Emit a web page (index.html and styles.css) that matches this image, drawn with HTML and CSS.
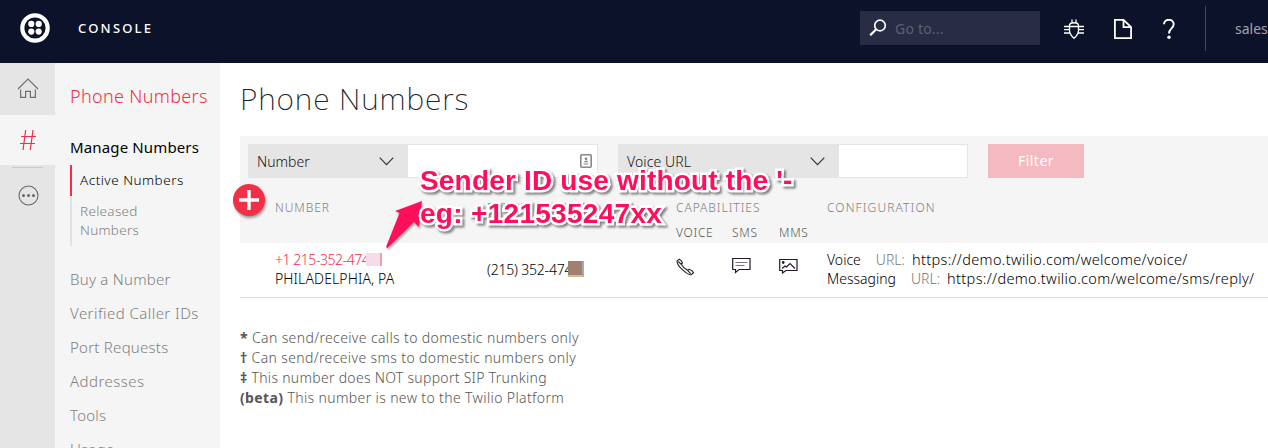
FILE: index.html
```html
<!DOCTYPE html>
<html lang="en">
<head>
<meta charset="utf-8">
<title>Phone Numbers</title>
<link rel="stylesheet" href="styles.css">
</head>
<body>
<header class="topbar">
  <svg class="logo" width="30" height="30" viewBox="0 0 30 30"><circle cx="15" cy="15" r="12.7" fill="none" stroke="#fff" stroke-width="4.2"/><g fill="#fff"><circle cx="11.3" cy="10.9" r="3.1"/><circle cx="18.7" cy="10.9" r="3.1"/><circle cx="11.3" cy="18.6" r="3.1"/><circle cx="18.7" cy="18.6" r="3.1"/></g></svg>
  <span class="brand">CONSOLE</span>
  <div class="search">
    <svg width="18" height="18" viewBox="0 0 18 18" fill="none" stroke="#fff"><circle cx="11" cy="6.500" r="5.300" stroke-width="1.7"/><path d="M7 10.500L1.200 16.300" stroke-width="2.200"/></svg>
    <span class="hint">Go to...</span>
  </div>
  <svg class="bug" width="20" height="21" viewBox="0 0 20 21" fill="none" stroke="#fff" stroke-width="1.300"><path d="M5.500 6.500C5.500 2.800 14.500 2.800 14.500 6.500V11.500C14.500 15 12 17.500 10 19.300C8 17.500 5.500 15 5.500 11.500ZM8 .5V3.500M12 .5V3.500M0 7.500H20M0 10.700H5.500M14.500 10.700H20M0 14H6M14 14H20"/></svg>
  <svg class="doc" width="18" height="20" viewBox="0 0 18 20" fill="none" stroke="#fff" stroke-width="1.800"><path d="M.9.9H9.500L17.100 8.200V19.100H.9ZM9.500.9V8.200H17.100"/></svg>
  <svg class="help" width="12" height="20" viewBox="0 0 12 20"><path d="M1 5.300C1 -.8 10.700 -.8 10.700 5.300C10.700 9.300 6 9.500 6 14.400" fill="none" stroke="#fff" stroke-width="1.900"/><circle cx="6" cy="18.300" r="1.700" fill="#fff"/></svg>
  <span class="account">sales</span>
</header>
<div class="shell">
  <nav class="rail">
    <span class="cell home"><svg width="22" height="21" viewBox="0 0 22 21" fill="none" stroke="#707070" stroke-width="1.200"><path d="M1 11L11 1L21 11M3.600 11.500V19.400H8.600V13.400H13.400V19.400H18.400V11.500"/></svg></span>
    <span class="cell hash"><svg width="16" height="20" viewBox="0 0 16 20" fill="none" stroke="#f22f46" stroke-width="1.200"><path d="M5.700 0L3 20M13 0L10.300 20M1 6.500H16M0 13.500H15"/></svg></span>
    <span class="cell more"><svg width="21" height="21" viewBox="0 0 21 21"><circle cx="10.500" cy="10.500" r="9.500" fill="none" stroke="#686868" stroke-width="1.100"/><g fill="#686868"><circle cx="5.500" cy="10.500" r="1.500"/><circle cx="10.500" cy="10.500" r="1.500"/><circle cx="15.500" cy="10.500" r="1.500"/></g></svg></span>
  </nav>
  <aside class="side">
    <h2 class="side-title">Phone Numbers</h2>
    <div class="group">Manage Numbers</div>
    <div class="sub active">Active Numbers</div>
    <div class="sub released">Released<br>Numbers</div>
    <div class="links">
      <span>Buy a Number</span><span class="verified">Verified Caller IDs</span><span>Port Requests</span><span class="verified">Addresses</span><span>Tools</span><span>Usage</span>
    </div>
  </aside>
  <main class="main">
    <h1 class="title">Phone Numbers</h1>
    <section class="panel">
      <div class="filters">
        <div class="select one"><span>Number</span><svg width="15" height="9" viewBox="0 0 15 9" fill="none" stroke="#333" stroke-width="1.200"><path d="M.7 .7L7.500 7.700L14.300 .7"/></svg></div>
        <div class="field first"><svg width="12" height="14" viewBox="0 0 12 14"><rect x=".8" y=".8" width="10.400" height="12.400" rx="1" fill="#fff" stroke="#888" stroke-width="1.600"/><circle cx="6" cy="4.800" r="1.400" fill="#888"/><path d="M3.500 8.200Q6 5 8.500 8.200ZM3.500 9.500H8.500V10.500H3.500Z" fill="#888"/></svg></div>
        <div class="select two"><span>Voice URL</span><svg width="15" height="9" viewBox="0 0 15 9" fill="none" stroke="#333" stroke-width="1.200"><path d="M.7 .7L7.500 7.700L14.300 .7"/></svg></div>
        <div class="field second"></div>
        <div class="button">Filter</div>
      </div>
      <div class="grid head">
        <span>NUMBER</span><span>FRIENDLY NAME</span>
        <div><span>CAPABILITIES</span><div class="kinds"><span>VOICE</span><span>SMS</span><span>MMS</span></div></div>
        <span class="h-config">CONFIGURATION</span>
      </div>
      <span class="add"><svg width="20" height="20" viewBox="0 0 20 20"><path d="M10 0V20M0 10H20" stroke="#fff" stroke-width="3.400"/></svg></span>
    </section>
    <div class="grid row">
      <div class="number"><div class="phone"><span>+1 215-352-474</span><i class="mask pink"></i></div><div class="city">PHILADELPHIA, PA</div></div>
      <div class="friendly"><span>(215) 352-474</span><i class="mask brown"></i></div>
      <div class="kinds icons">
        <span><svg width="19" height="18" viewBox="0 0 19 18" fill="none" stroke="#222" stroke-width="1.100"><path d="M1 3.200L3.300 1.200C4.700 1.800 5.800 3.200 6.400 4.800L5.300 6.300C6.500 8.700 9 11 11.600 12.300L13.200 11.300C15 12 16.500 13 17.500 14.600L15.200 16.700C12 17 1 8.500 1 3.200ZM2.200 3.500L5.300 6.300M11.600 12.300L14.700 15.700"/></svg></span>
        <span><svg width="19" height="17" viewBox="0 0 19 17" fill="none" stroke="#241a28" stroke-width="1.200"><path d="M.7 1.500H18V12.500H7L3.500 15.500V12.500H.7Z"/><path d="M3.500 5.500H15.500M3.500 8.500H12.500" stroke="#777"/></svg></span>
        <span><svg width="19" height="17" viewBox="0 0 19 17" fill="none" stroke="#241a28" stroke-width="1.200"><path d="M.7 2.500H18V13.500H7L3.500 16V13.500H.7Z"/><path d="M3 11.500L6 9L7.500 10L11 6.500L16 11.500"/><circle cx="4.200" cy="5.500" r=".8" fill="#222"/></svg></span>
      </div>
      <div class="config"><div>Voice<em>URL:</em><span>https://demo.twilio.com/welcome/voice/</span></div><div>Messaging<em>URL:</em><span>https://demo.twilio.com/welcome/sms/reply/</span></div></div>
    </div>
    <div class="notes">
      <div><b>*</b> Can send/receive calls to domestic numbers only</div>
      <div><b>†</b> Can send/receive sms to domestic numbers only</div>
      <div class="trunking"><b>‡</b> This number does NOT support SIP Trunking</div>
      <div><b>(beta)</b> This number is new to the Twilio Platform</div>
    </div>
  </main>
</div>
<svg class="arrow" width="50" height="58" viewBox="0 0 50 58"><path d="M5 53L18.500 19L14 17L41 7L38 33L33 28L6.500 54Z" fill="#ff0f5b"/></svg>
<div class="note-callout"><div>Sender ID use without the '-</div><div class="line-b">eg: +121535247xx</div></div>
</body>
</html>
```
FILE: styles.css
```css
* { box-sizing: border-box; }
body { margin: 0; width: 1268px; height: 448px; overflow: hidden; position: relative; background: #fff; font: 300 14px/19px "Noto Sans", sans-serif; color: #000; }
svg { display: block; flex: none; }
span, em { white-space: nowrap; }
.topbar { display: flex; align-items: center; height: 63px; padding: 0 0 7px 20px; background: #0d122b; }
.brand { flex: none; width: 810px; padding-left: 28px; color: #fff; font-size: 13px; font-weight: 500; letter-spacing: 2.2px; }
.search { display: flex; align-items: center; flex: none; width: 180px; height: 34px; padding-left: 9px; background: #282c45; }
.hint { padding-left: 8px; color: #5d6070; font-size: 14px; font-weight: 400; letter-spacing: .2px; }
.bug { margin: 2px 0 0 24px; }
.doc { margin: 2px 0 0 30px; }
.help { margin: 2px 0 0 31px; }
.account { height: 45px; margin-left: 30px; padding-left: 29px; border-left: 1px solid #41455a; color: #a3a3a8; font-weight: 400; line-height: 45px; }
.shell { display: flex; height: 385px; }
.rail { display: flex; flex-direction: column; width: 55px; background: #e5e5e5; }
.cell { display: flex; align-items: center; justify-content: center; height: 50px; }
.home { height: 52px; padding: 0 0 1px 1px; }
.hash { padding-left: 1px; background: #f5f5f5; }
.more { position: relative; height: 61px; padding: 0 0 1px 1px; }
.more::before { content: ""; position: absolute; top: 2px; left: 12px; width: 31px; height: 1px; background: #c9c9c9; }
.side { width: 165px; padding: 21px 0 0 15px; background: #f5f5f5; overflow: hidden; }
.side-title { margin: 0; color: #f22f46; font-size: 18px; font-weight: 300; line-height: 25px; letter-spacing: .33px; white-space: nowrap; }
.group { padding-top: 26px; font-size: 15px; font-weight: 400; line-height: 24px; letter-spacing: .14px; white-space: nowrap; }
.sub { padding-left: 8px; border-left: 2px solid #e1e1e1; font-size: 13.5px; line-height: 19px; letter-spacing: .3px; }
.active { height: 31px; margin-top: 6px; padding-top: 6px; border-color: #f22f46; letter-spacing: .5px; }
.released { height: 50px; padding-top: 6px; color: #808080; }
.links { display: flex; flex-direction: column; gap: 10px; padding-top: 21px; color: #808080; font-size: 15px; line-height: 24px; letter-spacing: .25px; }
.verified { letter-spacing: .45px; }
.main { flex: 1; padding-left: 20px; }
.title { margin: 0; height: 73px; padding-top: 16px; color: #222; font-size: 30px; font-weight: 200; line-height: 40px; letter-spacing: .85px; }
.panel { position: relative; height: 107px; padding: 8px 0 0 8px; background: #f5f5f5; }
.filters { display: flex; height: 34px; }
.select { display: flex; align-items: center; justify-content: space-between; height: 34px; padding: 0 13px 0 9px; background: #e5e5e5; color: #111; }
.one { width: 159px; }
.two { width: 220px; margin-left: 20px; letter-spacing: .1px; }
.field { display: flex; align-items: center; justify-content: flex-end; padding-right: 5px; border: 1px solid #e5e5e5; background: #fff; }
.first { width: 191px; }
.second { width: 130px; }
.button { width: 96px; margin-left: 20px; background: #f5b9c1; color: #fff; font-weight: 400; line-height: 34px; text-align: center; letter-spacing: .5px; }
.grid { display: grid; grid-template-columns: 212px 189px 151px 1fr; }
.head { padding: 20px 0 0 27px; color: #808080; font-size: 12px; letter-spacing: .95px; }
.kinds { display: flex; }
.head .kinds { padding-top: 6px; color: #555; letter-spacing: .7px; }
.kinds span:nth-child(1) { width: 56px; }
.kinds span:nth-child(2) { width: 47px; }
.h-config { letter-spacing: 1.12px; }
.add { position: absolute; left: -7px; top: 48px; display: flex; align-items: center; justify-content: center; width: 32px; height: 32px; border-radius: 50%; background: #f22f46; box-shadow: 1px 2px 3px #0006; }
.row { height: 55px; padding: 7px 0 0 35px; border-bottom: 1px solid #ddd; }
.phone, .friendly { display: flex; align-items: center; }
.phone { color: #f22f46; letter-spacing: -.45px; }
.phone span { width: 91px; }
.city { letter-spacing: .12px; }
.mask { position: relative; }
.pink { width: 16px; height: 13px; background: #f6dbea; border-right: 2px solid #f29dab; }
.friendly { height: 38px; letter-spacing: -.2px; }
.friendly span { width: 81px; }
.brown { width: 16px; height: 16px; background: #a08070; border-right: 2px solid #aaa; border-bottom: 2px solid #d5bb90; }
.icons { padding-top: 8px; }
.icons span:nth-child(n+2) { margin-top: -1px; }
.config em { padding: 0 7px 0 15px; color: #777; font-style: normal; }
.config div { white-space: nowrap; }
.config span { font-size: 14.5px; letter-spacing: .34px; }
.notes { padding-top: 30px; color: #555; line-height: 20px; letter-spacing: .37px; }
.trunking { letter-spacing: .29px; }
.notes b { font-weight: 700; }
.arrow { position: absolute; left: 381px; top: 194px; filter: drop-shadow(1px 2px 1px #0005); }
.note-callout { position: absolute; left: 420px; top: 164px; color: #ff0f5b; font: 700 28px/33px "Liberation Sans", sans-serif; letter-spacing: .18px; white-space: nowrap; -webkit-text-stroke: 5px #fff; paint-order: stroke fill; filter: drop-shadow(2px 2px 1px #0007); }
.line-b { letter-spacing: .3px; }
```
